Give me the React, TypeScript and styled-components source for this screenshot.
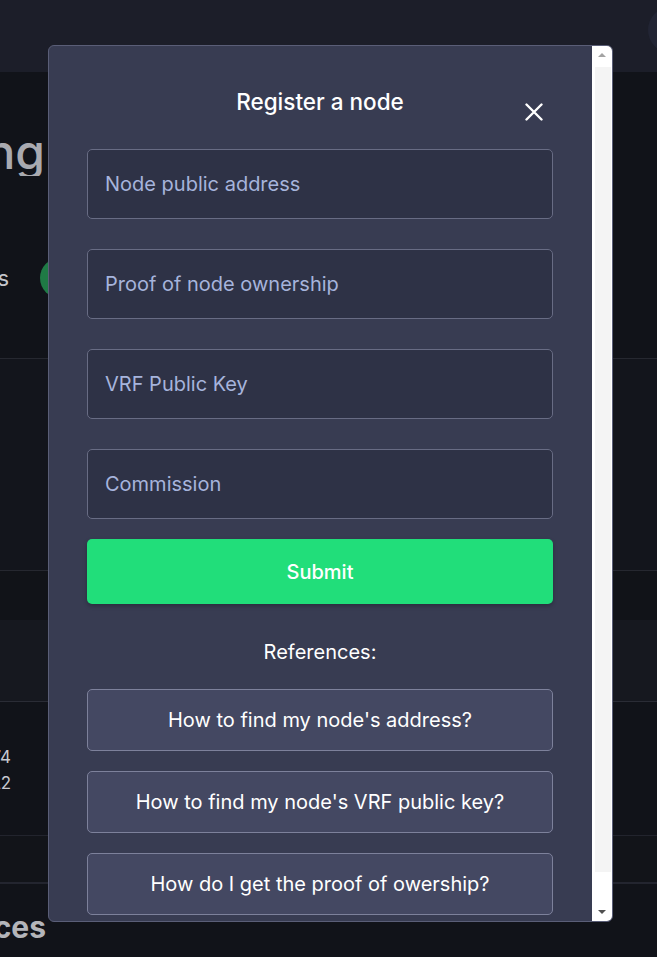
import React from "react";
import styled, { createGlobalStyle } from "styled-components";

const GlobalStyle = createGlobalStyle`
  html, body {
    margin: 0;
    padding: 0;
    background: #111319;
    font-family: Inter, "Noto Sans", sans-serif;
    overflow: hidden;
  }
`;

// page behind the modal
const Page = styled.div`
  min-height: 957px;
  background: #111319;
`;

const TopBar = styled.header`
  height: 72px;
  background: #1c1e29;
  display: flex;
  align-items: center;
  justify-content: flex-end;
  overflow: hidden;
`;

const Avatar = styled.div`
  width: 46px;
  height: 46px;
  border-radius: 50%;
  background: #222534;
  margin-right: -37px;
  margin-top: -12px;
`;

const Section = styled.section<{ $bg: string; $h: number; $line?: string }>`
  height: ${(p) => p.$h}px;
  background: ${(p) => p.$bg};
  border-bottom: ${(p) => p.$line || "none"};
  box-sizing: border-box;
  overflow: hidden;
`;

const Clip = styled.div<{ $w: number }>`
  width: ${(p) => p.$w}px;
  overflow: hidden;
  display: flex;
  justify-content: flex-end;
  white-space: nowrap;
`;

const Heading = styled.h1`
  margin: 56px 0 0;
  font-size: 48px;
  font-weight: 500;
  color: #a9aab0;
  line-height: 1;
`;

const StatusRow = styled.div`
  display: flex;
  align-items: center;
  gap: 31px;
  margin-top: 82px;
`;

const StatusLabel = styled.span`
  font-size: 22px;
  color: #c4c5cc;
`;

const Dot = styled.span`
  width: 40px;
  height: 40px;
  border-radius: 50%;
  background: #1f7a45;
`;

const Mono = styled.div`
  font-size: 17px;
  color: #c7c8d0;
  line-height: 26px;
`;

const Numbers = styled.div`
  padding-top: 42px;
`;

const SubHeading = styled.h2`
  margin: 25px 0 0;
  font-size: 30px;
  font-weight: 700;
  color: #b4b5ba;
`;

// modal
const Modal = styled.div`
  position: fixed;
  top: 45px;
  left: 48px;
  width: 565px;
  height: 877px;
  box-sizing: border-box;
  border: 1px solid #5a5e77;
  border-radius: 6px;
  background: #383c52;
  overflow: hidden;
  display: flex;
`;

const Body = styled.div`
  flex: 1;
  min-width: 0;
  overflow: hidden;
  padding: 0 39px 30px 38px;
`;

const ScrollTrack = styled.div`
  width: 20px;
  background: #ffffff;
  display: flex;
  flex-direction: column;
`;

const ScrollArrow = styled.div<{ $down?: boolean }>`
  height: 20px;
  display: flex;
  align-items: center;
  justify-content: center;

  &::before {
    content: "";
    width: 0;
    height: 0;
    border-left: 4px solid transparent;
    border-right: 4px solid transparent;
    ${(p) =>
      p.$down
        ? "border-top: 4px solid #505050; margin-top: 2px;"
        : "border-bottom: 4px solid #a3a3a3; margin-top: -2px;"}
  }
`;

const ScrollThumb = styled.div`
  flex: 1;
  margin: 1px 1px 29px 3px;
  background: #f4f4f4;
`;

const ModalHeader = styled.div`
  display: grid;
  grid-template-columns: 1fr auto 1fr;
  align-items: start;
  margin: 41px 0 28px;
`;

const Title = styled.h2`
  grid-column: 2;
  margin: 0;
  font-size: 22.5px;
  font-weight: 500;
  color: #ffffff;
  line-height: 30px;
`;

const CloseButton = styled.button`
  grid-column: 3;
  justify-self: end;
  margin: 16px 10px 0 0;
  padding: 0;
  border: 0;
  background: none;
  width: 18px;
  height: 18px;
  display: flex;
  cursor: pointer;
`;

const Form = styled.form`
  display: flex;
  flex-direction: column;
`;

const Input = styled.input`
  height: 70px;
  box-sizing: border-box;
  margin-bottom: 30px;
  padding: 0 17px;
  border: 1px solid #686c84;
  border-radius: 5px;
  background: #2e3246;
  color: #ffffff;
  font-family: Inter, "Noto Sans", sans-serif;
  font-size: 20px;
  outline: none;

  &::placeholder {
    color: #a6b4dc;
  }
  &:last-of-type {
    margin-bottom: 20px;
  }
`;

const SubmitButton = styled.button`
  height: 65px;
  border: 0;
  border-radius: 5px;
  background: #21de7a;
  color: #ffffff;
  font-family: Inter, "Noto Sans", sans-serif;
  font-size: 20px;
  font-weight: 500;
  box-shadow: 0 2px 4px rgba(0, 0, 0, 0.25);
  cursor: pointer;
`;

const RefTitle = styled.p`
  margin: 36px 0 25px;
  text-align: center;
  font-size: 20px;
  font-weight: 400;
  color: #ffffff;
  line-height: 24px;
`;

const RefList = styled.div`
  display: flex;
  flex-direction: column;
  gap: 20px;
`;

const RefButton = styled.button`
  height: 62px;
  flex-shrink: 0;
  border: 1px solid #7d819b;
  border-radius: 5px;
  background: #444862;
  color: #ffffff;
  font-family: Inter, "Noto Sans", sans-serif;
  font-size: 20px;
  cursor: pointer;
`;

const fields = [
  "Node public address",
  "Proof of node ownership",
  "VRF Public Key",
  "Commission",
];

const references = [
  "How to find my node's address?",
  "How to find my node's VRF public key?",
  "How do I get the proof of owership?",
];

export default function App() {
  return (
    <>
      <GlobalStyle />
      <Page>
        <TopBar>
          <Avatar />
        </TopBar>
        <Section $bg="#111319" $h={287} $line="1px solid #262830">
          <Clip $w={45}>
            <Heading>Staking</Heading>
          </Clip>
          <StatusRow>
            <Clip $w={9}>
              <StatusLabel>Nodes</StatusLabel>
            </Clip>
            <Dot />
          </StatusRow>
        </Section>
        <Section $bg="#13151c" $h={212} $line="1px solid #262830" />
        <Section $bg="#111318" $h={49} />
        <Section $bg="#16181f" $h={82} $line="1px solid #2a2c35" />
        <Section $bg="#111319" $h={134} $line="1px solid #22242d">
          <Numbers>
            <Clip $w={11}>
              <Mono>0x3F74</Mono>
            </Clip>
            <Clip $w={11}>
              <Mono>0x91A2</Mono>
            </Clip>
          </Numbers>
        </Section>
        <Section $bg="#121419" $h={48} $line="2px solid #23252f" />
        <Clip $w={46}>
          <SubHeading>Balances</SubHeading>
        </Clip>
      </Page>

      <Modal>
        <Body>
          <ModalHeader>
            <Title>Register a node</Title>
            <CloseButton aria-label="Close">
              <svg width="18" height="18" viewBox="0 0 18 18">
                <path
                  d="M1.5 1.5 L16.5 16.5 M16.5 1.5 L1.5 16.5"
                  stroke="#ffffff"
                  strokeWidth="2.4"
                  strokeLinecap="round"
                />
              </svg>
            </CloseButton>
          </ModalHeader>
          <Form onSubmit={(e) => e.preventDefault()}>
            {fields.map((f) => (
              <Input key={f} placeholder={f} />
            ))}
            <SubmitButton type="submit">Submit</SubmitButton>
          </Form>
          <RefTitle>References:</RefTitle>
          <RefList>
            {references.map((r) => (
              <RefButton key={r}>{r}</RefButton>
            ))}
          </RefList>
        </Body>
        <ScrollTrack>
          <ScrollArrow />
          <ScrollThumb />
          <ScrollArrow $down />
        </ScrollTrack>
      </Modal>
    </>
  );
}
